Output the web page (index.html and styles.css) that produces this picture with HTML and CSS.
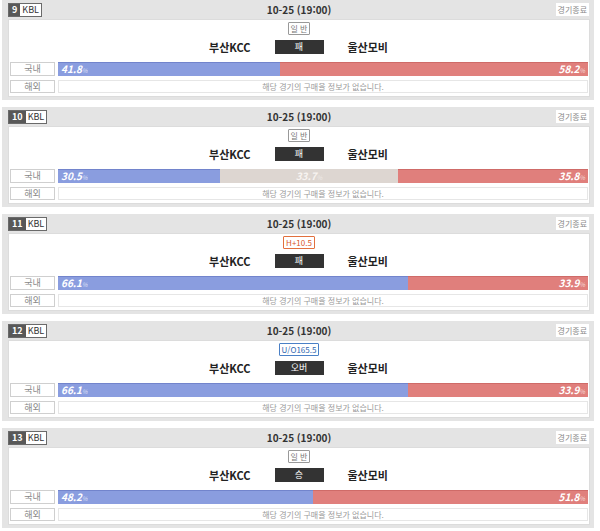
FILE: index.html
```html
<!DOCTYPE html>
<html lang="ko">
<head>
    <meta charset="UTF-8">
    <title>KBL 경기 목록</title>
    <link rel="stylesheet" href="styles.css">
</head>
<body>

    <div class="jogo">
        <div class="jogo__topo">
            <span class="jogo__selo"><b class="jogo__num">9</b><span class="jogo__liga">KBL</span></span>
            <span class="jogo__data">10-25 (19:00)</span>
            <span class="jogo__estado"><span>경기종료</span></span>
        </div>
        <div class="jogo__painel">
            <div class="jogo__tipo"><span class="tipo tipo--geral">일 반</span></div>
            <div class="jogo__times">
                <span class="jogo__casa">부산KCC</span>
                <span class="jogo__resultado">패</span>
                <span class="jogo__fora">울산모비</span>
            </div>
            <div class="jogo__linha">
                <span class="jogo__rotulo">국내</span>
                <div class="barra">
                    <div class="barra__casa" style="width: 41.8%">41.8<small>%</small></div>
                    <div class="barra__fora" style="width: 58.2%">58.2<small>%</small></div>
                </div>
            </div>
            <div class="jogo__linha">
                <span class="jogo__rotulo">해외</span>
                <div class="jogo__info">해당 경기의 구매율 정보가 없습니다.</div>
            </div>
        </div>
    </div>

    <div class="jogo">
        <div class="jogo__topo">
            <span class="jogo__selo"><b class="jogo__num">10</b><span class="jogo__liga">KBL</span></span>
            <span class="jogo__data">10-25 (19:00)</span>
            <span class="jogo__estado"><span>경기종료</span></span>
        </div>
        <div class="jogo__painel">
            <div class="jogo__tipo"><span class="tipo tipo--geral">일 반</span></div>
            <div class="jogo__times">
                <span class="jogo__casa">부산KCC</span>
                <span class="jogo__resultado">패</span>
                <span class="jogo__fora">울산모비</span>
            </div>
            <div class="jogo__linha">
                <span class="jogo__rotulo">국내</span>
                <div class="barra">
                    <div class="barra__casa" style="width: 30.5%">30.5<small>%</small></div>
                    <div class="barra__empate" style="width: 33.7%">33.7<small>%</small></div>
                    <div class="barra__fora" style="width: 35.8%">35.8<small>%</small></div>
                </div>
            </div>
            <div class="jogo__linha">
                <span class="jogo__rotulo">해외</span>
                <div class="jogo__info">해당 경기의 구매율 정보가 없습니다.</div>
            </div>
        </div>
    </div>

    <div class="jogo">
        <div class="jogo__topo">
            <span class="jogo__selo"><b class="jogo__num">11</b><span class="jogo__liga">KBL</span></span>
            <span class="jogo__data">10-25 (19:00)</span>
            <span class="jogo__estado"><span>경기종료</span></span>
        </div>
        <div class="jogo__painel">
            <div class="jogo__tipo"><span class="tipo tipo--handicap">H+10.5</span></div>
            <div class="jogo__times">
                <span class="jogo__casa">부산KCC</span>
                <span class="jogo__resultado">패</span>
                <span class="jogo__fora">울산모비</span>
            </div>
            <div class="jogo__linha">
                <span class="jogo__rotulo">국내</span>
                <div class="barra">
                    <div class="barra__casa" style="width: 66.1%">66.1<small>%</small></div>
                    <div class="barra__fora" style="width: 33.9%">33.9<small>%</small></div>
                </div>
            </div>
            <div class="jogo__linha">
                <span class="jogo__rotulo">해외</span>
                <div class="jogo__info">해당 경기의 구매율 정보가 없습니다.</div>
            </div>
        </div>
    </div>

    <div class="jogo">
        <div class="jogo__topo">
            <span class="jogo__selo"><b class="jogo__num">12</b><span class="jogo__liga">KBL</span></span>
            <span class="jogo__data">10-25 (19:00)</span>
            <span class="jogo__estado"><span>경기종료</span></span>
        </div>
        <div class="jogo__painel">
            <div class="jogo__tipo"><span class="tipo tipo--total">U/O165.5</span></div>
            <div class="jogo__times">
                <span class="jogo__casa">부산KCC</span>
                <span class="jogo__resultado">오버</span>
                <span class="jogo__fora">울산모비</span>
            </div>
            <div class="jogo__linha">
                <span class="jogo__rotulo">국내</span>
                <div class="barra">
                    <div class="barra__casa" style="width: 66.1%">66.1<small>%</small></div>
                    <div class="barra__fora" style="width: 33.9%">33.9<small>%</small></div>
                </div>
            </div>
            <div class="jogo__linha">
                <span class="jogo__rotulo">해외</span>
                <div class="jogo__info">해당 경기의 구매율 정보가 없습니다.</div>
            </div>
        </div>
    </div>

    <div class="jogo">
        <div class="jogo__topo">
            <span class="jogo__selo"><b class="jogo__num">13</b><span class="jogo__liga">KBL</span></span>
            <span class="jogo__data">10-25 (19:00)</span>
            <span class="jogo__estado"><span>경기종료</span></span>
        </div>
        <div class="jogo__painel">
            <div class="jogo__tipo"><span class="tipo tipo--geral">일 반</span></div>
            <div class="jogo__times">
                <span class="jogo__casa">부산KCC</span>
                <span class="jogo__resultado">승</span>
                <span class="jogo__fora">울산모비</span>
            </div>
            <div class="jogo__linha">
                <span class="jogo__rotulo">국내</span>
                <div class="barra">
                    <div class="barra__casa" style="width: 48.2%">48.2<small>%</small></div>
                    <div class="barra__fora" style="width: 51.8%">51.8<small>%</small></div>
                </div>
            </div>
            <div class="jogo__linha">
                <span class="jogo__rotulo">해외</span>
                <div class="jogo__info">해당 경기의 구매율 정보가 없습니다.</div>
            </div>
        </div>
    </div>

</body>
</html>
```

FILE: styles.css
```css
body{
    margin: 0;
    padding-left: 2px;
    background: #fff;
    font-family: "Noto Sans CJK KR", "Noto Sans", sans-serif;
    color: #333;
}

.jogo{
    width: 592px;
    box-sizing: border-box;
    background: #e4e4e4;
    padding: 0 4px 3px 6px;
    margin-bottom: 7px; /* espaço branco entre os cartões */
}

.jogo__topo{
    height: 19px;
    display: grid;
    grid-template-columns: 1fr auto 1fr;
    align-items: center;
}

.jogo__selo{
    justify-self: start;
    display: flex;
    height: 12px;
    border: 1px solid #6a6a6a;
    font-size: 9px;
    line-height: 12px;
}

.jogo__num{
    background: #585858;
    color: #fff;
    padding: 0 3px;
    font-weight: bold;
}

.jogo__liga{
    background: #fff;
    color: #333;
    padding: 0 2px;
}

.jogo__data{
    font-size: 10px;
    font-weight: bold;
    color: #333;
}

.jogo__estado{
    justify-self: end;
    margin-right: 1px;
}

.jogo__estado span{
    display: block;
    background: #fff;
    color: #8a8a8a;
    font-size: 8px;
    line-height: 13px;
    padding: 0 2px;
}

.jogo__painel{
    background: #fff;
    border: 1px solid #dcdcdc;
    height: 78px;
    box-sizing: border-box;
    padding: 2px 1px 0;
}

.jogo__tipo{
    display: flex;
    justify-content: center;
    height: 13px;
}

.tipo{
    border: 1px solid #999;
    color: #777;
    font-size: 8px;
    line-height: 11px;
    padding: 0 2px;
    border-radius: 1px;
}

.tipo--handicap{
    border-color: #e2703e;
    color: #d8582a;
}

.tipo--total{
    border-color: #4a80c6;
    color: #2f66b0;
}

.jogo__times{
    display: grid;
    grid-template-columns: 1fr 49px 1fr;
    column-gap: 24px;
    align-items: center;
    height: 14px;
    margin-top: 4px;
}

.jogo__casa,
.jogo__fora{
    font-size: 11px;
    font-weight: bold;
    color: #222;
}

.jogo__casa{
    text-align: right;
}

.jogo__resultado{
    background: #333;
    color: #fff;
    font-size: 9px;
    line-height: 14px;
    text-align: center;
}

.jogo__linha{
    display: flex;
    gap: 3px;
    height: 14px;
    margin-top: 9px;
}

.jogo__linha + .jogo__linha{
    height: 13px;
    margin-top: 4px;
}

.jogo__rotulo{
    width: 45px;
    box-sizing: border-box;
    border: 1px solid #cfcfcf;
    background: #fff;
    color: #888;
    font-size: 9px;
    text-align: center;
    line-height: 11px;
}

.barra{
    flex: 1;
    display: flex;
    font-size: 10px;
    font-weight: bold;
    font-style: italic;
    color: #fff;
    line-height: 14px;
}

.barra small{
    font-size: 6px;
    font-weight: normal;
    opacity: 0.7;
}

.barra__casa{
    background: #8a9ddf;
    padding-left: 3px;
    box-sizing: border-box;
    box-shadow: inset 0 1px 0 #7284cc;
}

.barra__empate{
    background: #ddd6d1;
    color: #f7f3f0;
    text-align: center;
    box-sizing: border-box;
}

.barra__fora{
    background: #e07f7c;
    text-align: right;
    padding-right: 3px;
    box-sizing: border-box;
    box-shadow: inset 0 1px 0 #cf6b68;
}

.jogo__info{
    flex: 1;
    border: 1px solid #e6e6e6;
    color: #9a9a9a;
    font-size: 8px;
    text-align: center;
    line-height: 11px;
}
```
